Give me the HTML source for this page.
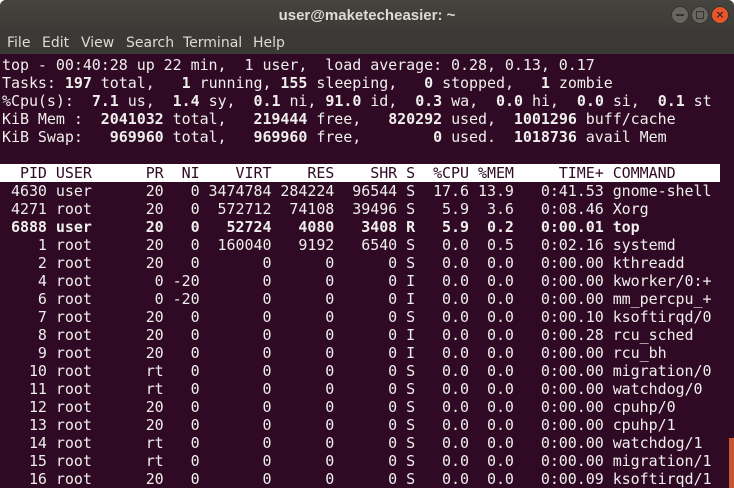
<!DOCTYPE html>
<html><head><meta charset="utf-8"><style>
html,body{margin:0;padding:0;width:734px;height:488px;overflow:hidden;background:#fff}
.win{position:absolute;left:0;top:0;width:734px;height:488px;background:#300a24;border-radius:6px 6px 0 0;overflow:hidden}
.title{position:absolute;left:0;top:0;width:734px;height:33px;background:linear-gradient(#45443f,#3b3a36);color:#dfdbd2;font:bold 15px "Liberation Sans","DejaVu Sans",sans-serif;text-align:center;line-height:31px}
.menu{position:absolute;left:0;top:33px;width:734px;height:21px;background:#3a3935;color:#dfdbd2;font:14px "DejaVu Sans","Liberation Sans",sans-serif;line-height:21px}
.menu span{position:absolute;top:0}
.btn{position:absolute;top:6px;width:18px;height:18px;border-radius:50%;background:#66655f;border:1px solid #35342f;box-sizing:border-box}
.term{position:absolute;left:2px;top:56px;margin:0;font:15px "DejaVu Sans Mono","Liberation Mono",monospace;letter-spacing:-0.05px;line-height:18px;color:#eeeeec;white-space:pre}
.hd{background:#fff;color:#300a24;display:inline-block;width:718px;margin-left:-2px;padding-left:2px}
b{font-weight:bold}
.sb{position:absolute;left:729px;top:438px;width:5px;height:50px;background:#c8552e}
</style></head><body>
<div class="win">
<div class="title">user@maketecheasier: ~</div>
<div class="btn" style="left:671px"></div>
<div class="btn" style="left:691px"></div>
<div class="btn" style="left:711px;background:#e9562a"></div>
<div style="position:absolute;left:676px;top:14px;width:8px;height:2px;background:#35342f"></div>
<div style="position:absolute;left:696px;top:11px;width:6px;height:6px;border:1px solid #35342f"></div>
<div style="position:absolute;left:711px;top:6px;width:18px;height:18px;color:#3a2a20;font:bold 11px 'DejaVu Sans',sans-serif;text-align:center;line-height:18px">×</div>
<div class="menu"><span style="left:7px">File</span><span style="left:42px">Edit</span><span style="left:81px">View</span><span style="left:126px">Search</span><span style="left:183px">Terminal</span><span style="left:253px">Help</span></div>
<pre class="term">top - 00:40:28 up 22 min,  1 user,  load average: 0.28, 0.13, 0.17
Tasks:<b> 197 </b>total,<b>   1 </b>running,<b> 155 </b>sleeping,<b>   0 </b>stopped,<b>   1 </b>zombie
%Cpu(s):<b>  7.1 </b>us,<b>  1.4 </b>sy,<b>  0.1 </b>ni,<b> 91.0 </b>id,<b>  0.3 </b>wa,<b>  0.0 </b>hi,<b>  0.0 </b>si,<b>  0.1 </b>st
KiB Mem :<b>  2041032 </b>total,<b>   219444 </b>free,<b>   820292 </b>used,<b>  1001296 </b>buff/cache
KiB Swap:<b>   969960 </b>total,<b>   969960 </b>free,<b>        0 </b>used.<b>  1018736 </b>avail Mem

<span class="hd">  PID USER      PR  NI    VIRT    RES    SHR S  %CPU %MEM     TIME+ COMMAND     </span>
 4630 user      20   0 3474784 284224  96544 S  17.6 13.9   0:41.53 gnome-shell
 4271 root      20   0  572712  74108  39496 S   5.9  3.6   0:08.46 Xorg
<b> 6888 user      20   0   52724   4080   3408 R   5.9  0.2   0:00.01 top</b>
    1 root      20   0  160040   9192   6540 S   0.0  0.5   0:02.16 systemd
    2 root      20   0       0      0      0 S   0.0  0.0   0:00.00 kthreadd
    4 root       0 -20       0      0      0 I   0.0  0.0   0:00.00 kworker/0:+
    6 root       0 -20       0      0      0 I   0.0  0.0   0:00.00 mm_percpu_+
    7 root      20   0       0      0      0 S   0.0  0.0   0:00.10 ksoftirqd/0
    8 root      20   0       0      0      0 I   0.0  0.0   0:00.28 rcu_sched
    9 root      20   0       0      0      0 I   0.0  0.0   0:00.00 rcu_bh
   10 root      rt   0       0      0      0 S   0.0  0.0   0:00.00 migration/0
   11 root      rt   0       0      0      0 S   0.0  0.0   0:00.00 watchdog/0
   12 root      20   0       0      0      0 S   0.0  0.0   0:00.00 cpuhp/0
   13 root      20   0       0      0      0 S   0.0  0.0   0:00.00 cpuhp/1
   14 root      rt   0       0      0      0 S   0.0  0.0   0:00.00 watchdog/1
   15 root      rt   0       0      0      0 S   0.0  0.0   0:00.00 migration/1
   16 root      20   0       0      0      0 S   0.0  0.0   0:00.09 ksoftirqd/1</pre>
<div class="sb"></div>
</div>
</body></html>
